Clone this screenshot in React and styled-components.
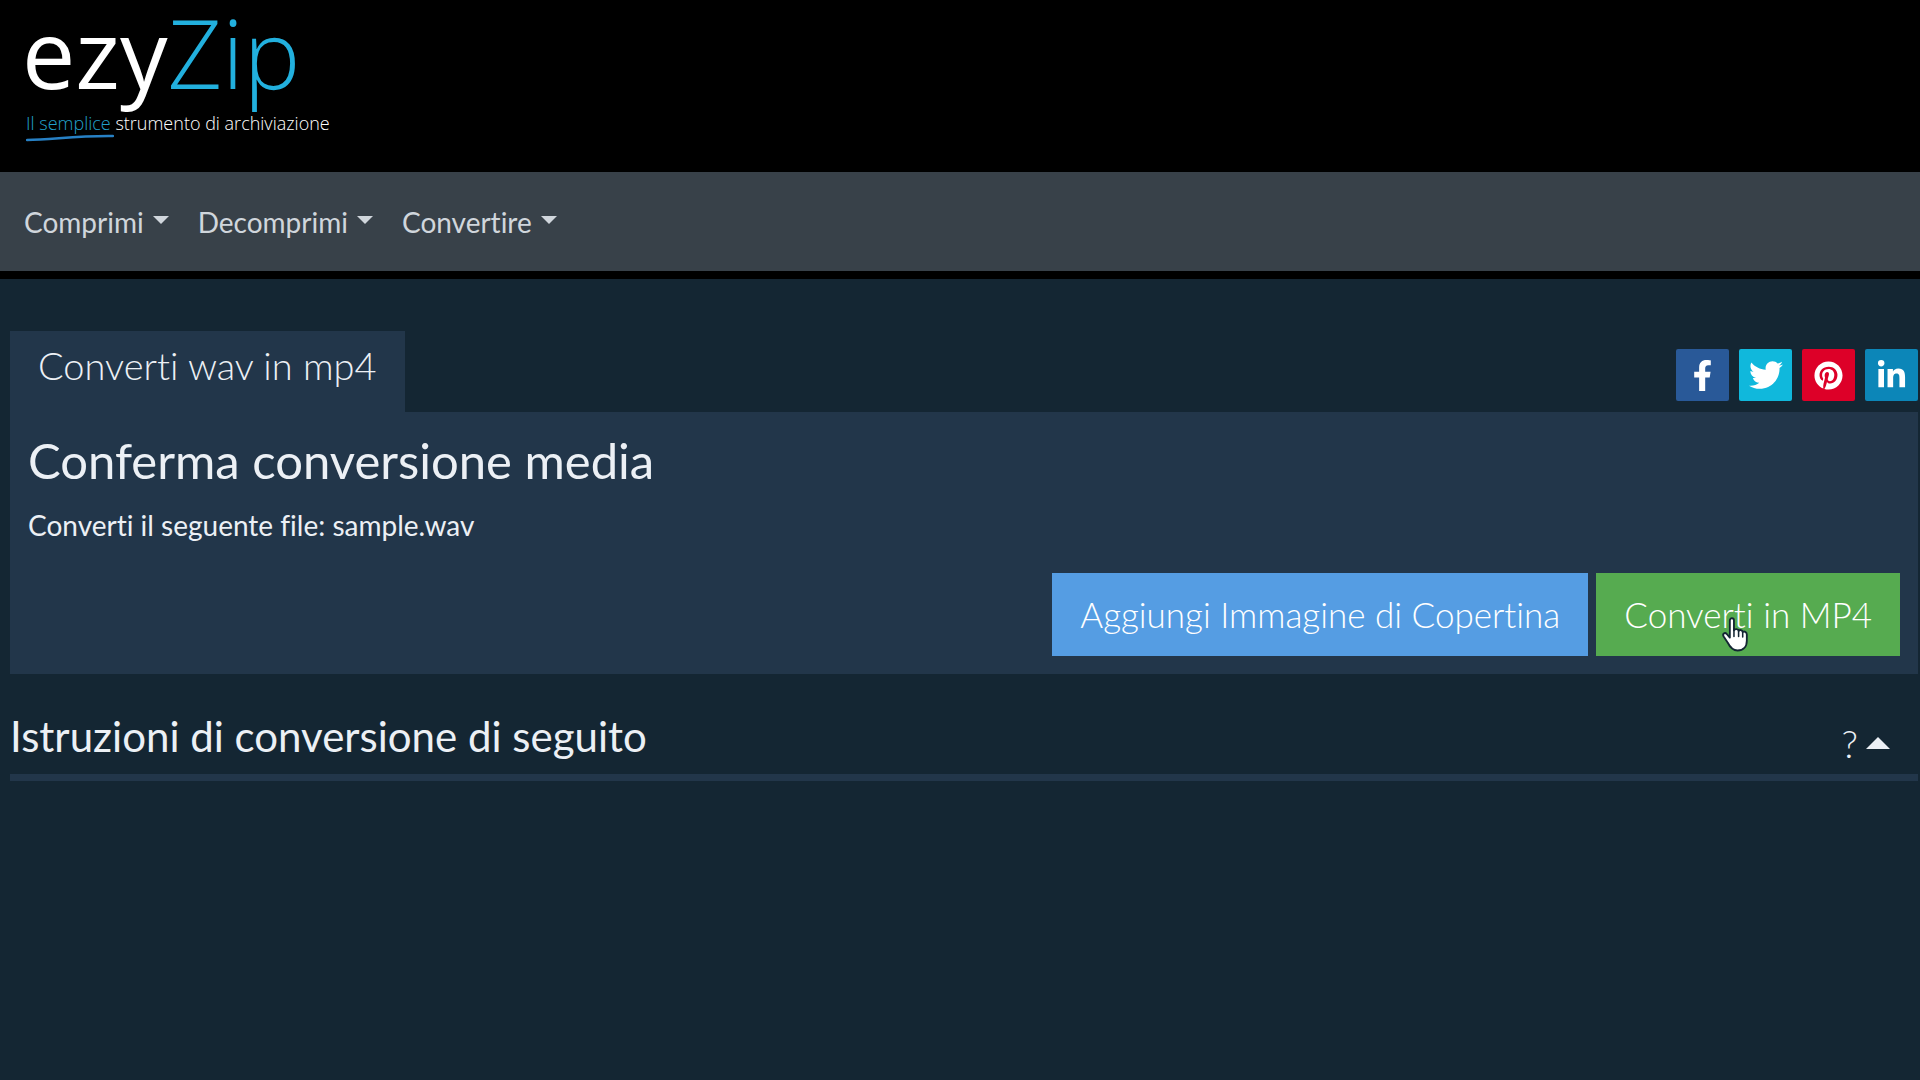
import React from "react";
import styled, { createGlobalStyle } from "styled-components";
import { FaFacebookF, FaTwitter, FaPinterest, FaLinkedinIn } from "react-icons/fa";

const GlobalStyle = createGlobalStyle`
  *, *::before, *::after { box-sizing: border-box; }
  body {
    margin: 0;
    min-height: 100vh;
    background: #142633;
    color: #ecf0f5;
    font-family: Lato, "Open Sans", sans-serif;
    font-size: 28px;
    line-height: 40px;
    font-variant-ligatures: none;
  }
  h1, h2, p { margin: 0; font-weight: 400; }
`;

const Header = styled.header`
  background: #000;
  padding: 2px 26px 29px;
`;

const Logo = styled.a`
  display: inline-flex;
  flex-direction: column;
  color: #fff;
  text-decoration: none;
  font-family: "Open Sans", "Noto Sans", sans-serif;
`;

const Wordmark = styled.span`
  margin-left: -4px;
  font-size: 95px;
  line-height: 100px;
`;

const WordmarkAccent = styled.span`
  color: #22b0de;
  font-weight: 300;
`;

const Tagline = styled.span`
  margin-top: 11px;
  font-size: 18px;
  line-height: 20px;
  font-weight: 300;
  white-space: nowrap;
`;

const TaglineAccent = styled.span`
  color: #22a0cc;
`;

const Swoosh = styled.svg`
  display: block;
  width: 88px;
  height: 10px;
`;

const NavBar = styled.nav`
  display: flex;
  gap: 29px;
  padding: 30px 24px 29px;
  background: #384149;
  border-bottom: 8px solid #000;
  box-sizing: content-box;
`;

const NavButton = styled.button`
  display: flex;
  align-items: center;
  gap: 9px;
  padding: 0;
  border: 0;
  background: none;
  color: #d0d6dc;
  font: inherit;
  font-variant-ligatures: none;
  cursor: pointer;
`;

const Caret = styled.span`
  border: 8px solid transparent;
  border-bottom-width: 0;
  border-top-color: currentColor;
  margin-bottom: 4px;
`;

const Page = styled.main`
  padding: 52px 2px 0 10px;
`;

const TabRow = styled.div`
  display: flex;
  justify-content: space-between;
  align-items: stretch;
`;

const Tab = styled.button`
  padding: 14px 28px 27px;
  border: 0;
  background: #22364a;
  color: #ecf0f5;
  font: inherit;
  font-variant-ligatures: none;
  font-size: 38px;
  line-height: 40px;
  font-weight: 300;
`;

const ShareList = styled.div`
  display: flex;
  gap: 10px;
  padding-top: 18px;
`;

const ShareLink = styled.a`
  display: grid;
  place-items: center;
  width: 53px;
  height: 52px;
  border-radius: 2px;
  background: ${(p) => p.$color};
  color: #fff;
  font-size: ${(p) => p.$size}px;
  line-height: 1;
`;

const Panel = styled.section`
  padding: 18px 18px;
  background: #22364a;
`;

const Title = styled.h1`
  font-size: 49px;
  line-height: 60px;
`;

const FileLine = styled.p`
  padding: 15px 0 28px;
`;

const Actions = styled.div`
  display: flex;
  justify-content: flex-end;
  gap: 8px;
`;

const ActionButton = styled.button`
  position: relative;
  height: 83px;
  padding: 0 28px 2px;
  border: 0;
  background: ${(p) => p.$color};
  color: #fff;
  font: inherit;
  font-variant-ligatures: none;
  font-size: 35px;
  font-weight: 300;
  cursor: pointer;
`;

const Pointer = styled.svg`
  position: absolute;
  left: 125px;
  top: 44px;
  width: 29px;
  height: 35px;
`;

const HelpHeader = styled.div`
  display: flex;
  justify-content: space-between;
  align-items: center;
  padding: 32px 28px 8px 0;
  border-bottom: 7px solid #22364a;
`;

const HelpTitle = styled.h2`
  font-size: 42px;
  line-height: 60px;
`;

const HelpToggle = styled.button`
  display: flex;
  align-items: center;
  gap: 8px;
  padding: 14px 0 0;
  border: 0;
  background: none;
  color: #ecf0f5;
  font: inherit;
  font-size: 38px;
  line-height: 40px;
  font-weight: 300;
`;

const UpCaret = styled.span`
  border: 12px solid transparent;
  border-top-width: 0;
  border-bottom-color: currentColor;
`;

const menus = ["Comprimi", "Decomprimi", "Convertire"];

const shares = [
  { name: "Facebook", color: "#295998", size: 31, Icon: FaFacebookF },
  { name: "Twitter", color: "#10b8dc", size: 34, Icon: FaTwitter },
  { name: "Pinterest", color: "#dd0028", size: 29, Icon: FaPinterest },
  { name: "LinkedIn", color: "#0c86b8", size: 31, Icon: FaLinkedinIn },
];

export default function App() {
  return (
    <>
      <GlobalStyle />
      <Header>
        <Logo href="#">
          <Wordmark>ezy<WordmarkAccent>Zip</WordmarkAccent></Wordmark>
          <Tagline><TaglineAccent>Il semplice</TaglineAccent> strumento di archiviazione</Tagline>
          <Swoosh viewBox="0 0 88 10" aria-hidden="true">
            <path d="M1 7C26 7 48 2.500 87 3" fill="none" stroke="#2780c4" strokeWidth="2.5" strokeLinecap="round" />
          </Swoosh>
        </Logo>
      </Header>
      <NavBar>
        {menus.map((m) => (
          <NavButton key={m} type="button">{m}<Caret /></NavButton>
        ))}
      </NavBar>
      <Page>
        <TabRow>
          <Tab type="button">Converti wav in mp4</Tab>
          <ShareList>
            {shares.map(({ name, color, size, Icon }) => (
              <ShareLink key={name} href="#" aria-label={name} $color={color} $size={size}><Icon /></ShareLink>
            ))}
          </ShareList>
        </TabRow>
        <Panel>
          <Title>Conferma conversione media</Title>
          <FileLine>Converti il seguente file: sample.wav</FileLine>
          <Actions>
            <ActionButton type="button" $color="#559de3">Aggiungi Immagine di Copertina</ActionButton>
            <ActionButton type="button" $color="#56ab50">
              Converti in MP4
              <Pointer viewBox="0 0 27 34" aria-hidden="true">
                <path
                  d="M8 3.500C8 .5 12 .5 12 3.500V13C13 11 16 11.500 16.500 13.500C18 12 20 12.500 20.500 14.500C22 13.500 24.500 14.500 24.500 17V23C24.500 29 21 32.500 15.500 32.500C10.500 32.500 8 29 6 25L2 19C.5 16.500 3 14.500 5 16.500L8 20Z"
                  fill="#fff" stroke="#142633" strokeWidth="1.800" strokeLinejoin="round"
                />
                <path d="M12 12V19M16.500 13.500V19M20.500 14.500V19.500" fill="none" stroke="#142633" strokeWidth="1.500" strokeLinecap="round" />
              </Pointer>
            </ActionButton>
          </Actions>
        </Panel>
        <HelpHeader>
          <HelpTitle>Istruzioni di conversione di seguito</HelpTitle>
          <HelpToggle type="button" aria-label="Mostra istruzioni">?<UpCaret /></HelpToggle>
        </HelpHeader>
      </Page>
    </>
  );
}
